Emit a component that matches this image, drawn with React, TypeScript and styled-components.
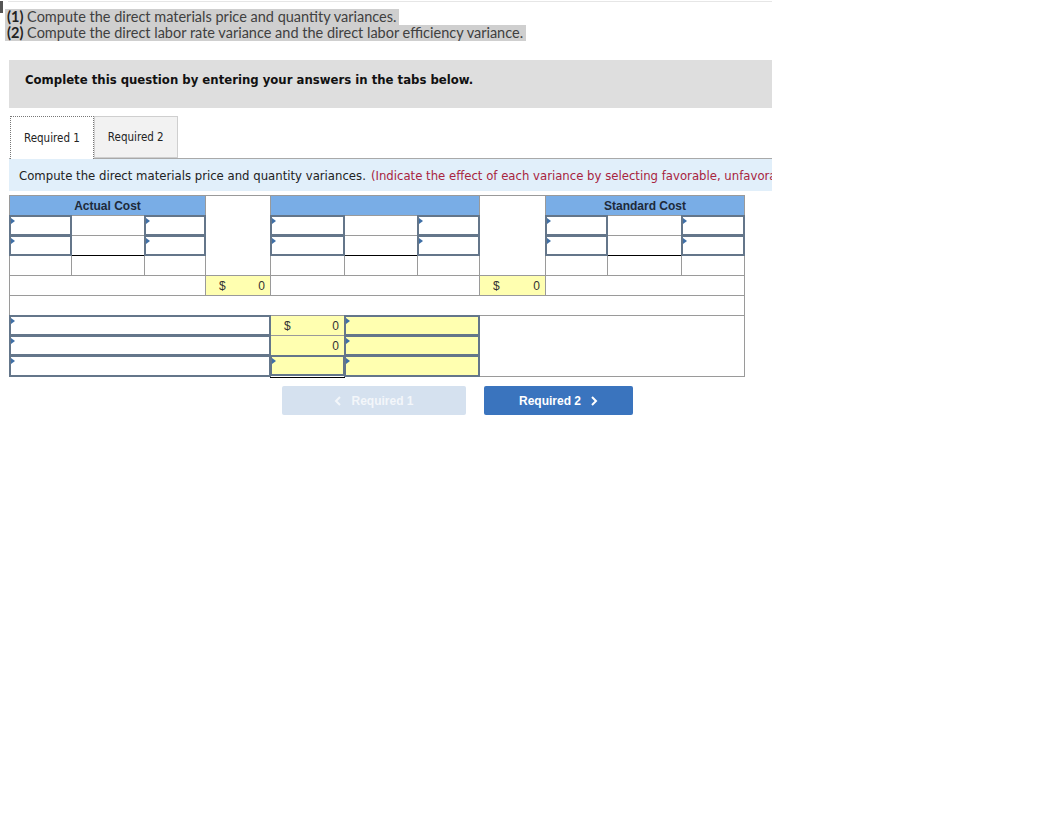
import { FC } from "react";
import styled, { createGlobalStyle } from "styled-components";

const GlobalStyle = createGlobalStyle`
  body {
    margin: 0;
    background: #ffffff;
    font-family: "Liberation Sans", Arial, sans-serif;
  }
`;

const Page = styled.div`
  width: 1060px;
  min-height: 816px;
  position: relative;
`;

const TopRule = styled.div`
  margin-left: 8px;
  width: 764px;
  height: 1px;
  background: #e6e6e6;
  margin-top: 1px;
`;

const EdgeMark = styled.div`
  position: absolute;
  left: 0;
  top: 0;
  width: 3px;
  height: 12px;
  background: #555;
`;

const Prompt = styled.div`
  padding: 7px 0 0 5px;
  display: flex;
  flex-direction: column;
  align-items: flex-start;
`;

const PromptLine = styled.span`
  font-family: Lato, "Open Sans", sans-serif;
  font-size: 14.5px;
  line-height: 16px;
  color: #404040;
  background: #cfcfcf;
  padding: 0 3px 0 2px;

  b {
    font-weight: 700;
    color: #222;
  }
`;

const Wrap = styled.div`
  margin-left: 9px;
  width: 763px;
`;

const Notice = styled.div`
  margin-top: 19px;
  height: 48px;
  box-sizing: border-box;
  background: #dedede;
  padding: 12px 0 0 16px;
  font-family: "DejaVu Sans Condensed", "DejaVu Sans", sans-serif;
  font-weight: 700;
  font-size: 13px;
  color: #111;
`;

const TabBar = styled.div`
  margin-top: 7px;
  display: flex;
  align-items: flex-end;
  border-bottom: 1px solid #a9a9a9;
  height: 43px;
`;

const Tab = styled.div<{ $active?: boolean }>`
  height: ${({ $active }) => ($active ? "43px" : "42px")};
  box-sizing: border-box;
  margin-left: ${({ $active }) => ($active ? "1px" : "0")};
  margin-bottom: ${({ $active }) => ($active ? "-1px" : "0")};
  padding: 0 13px;
  display: flex;
  align-items: center;
  font-family: "DejaVu Sans Condensed", "DejaVu Sans", sans-serif;
  font-size: 11.5px;
  color: #222;
  background: ${({ $active }) => ($active ? "#ffffff" : "#f2f2f2")};
  border: 1px ${({ $active }) => ($active ? "dotted #777" : "solid #cfcfcf")};
  border-bottom: ${({ $active }) => ($active ? "none" : "1px solid #cfcfcf")};
`;

const Instruction = styled.div`
  height: 32px;
  background: #e1effa;
  display: flex;
  align-items: center;
  padding-left: 10px;
  white-space: nowrap;
  overflow: hidden;
  font-family: "DejaVu Sans Condensed", "DejaVu Sans", sans-serif;
  font-size: 13px;
  color: #222;
`;

const Hint = styled.span`
  color: #a8243e;
  margin-left: 5px;
`;

const Grid = styled.table`
  margin-top: 4px;
  border-collapse: collapse;
  table-layout: fixed;
  width: 735px;
  font-family: "Liberation Sans", Arial, sans-serif;
  font-size: 12px;
`;

type Under = "single" | "double";

const Cell = styled.td<{
  $head?: boolean;
  $yellow?: boolean;
  $under?: Under;
}>`
  height: 19px;
  padding: 0;
  position: relative;
  border: 1px solid #9a9a9a;
  background: ${({ $head, $yellow }) =>
    $head ? "#79ade6" : $yellow ? "#ffffb0" : "#ffffff"};
  text-align: center;
  font-weight: ${({ $head }) => ($head ? 700 : 400)};
  color: ${({ $head }) => ($head ? "#1e2a3a" : "#222")};
  border-bottom: ${({ $under }) =>
    $under === "single"
      ? "1px solid #000"
      : $under === "double"
      ? "3px double #000"
      : "1px solid #9a9a9a"};
`;

const InputBox = styled.div<{ $yellow?: boolean }>`
  position: absolute;
  inset: -1px;
  border: 2px solid #64768a;
  background: ${({ $yellow }) => ($yellow ? "#ffffb0" : "#ffffff")};
`;

const Marker = styled.span`
  position: absolute;
  left: 0;
  top: 1px;
  width: 0;
  height: 0;
  border-top: 3px solid transparent;
  border-bottom: 3px solid transparent;
  border-left: 4px solid #3f6fa6;
`;

const Amount = styled.div`
  display: flex;
  justify-content: space-between;
  align-items: center;
  padding: 0 5px 0 13px;
  font-size: 12px;
  color: #333;
`;

const Buttons = styled.div`
  display: flex;
  gap: 18px;
  margin: 8px 0 0 273px;
`;

const NavButton = styled.button<{ $disabled?: boolean }>`
  height: 29px;
  width: ${({ $disabled }) => ($disabled ? "184px" : "149px")};
  border: none;
  border-radius: 2px;
  background: ${({ $disabled }) => ($disabled ? "#d5e1ef" : "#3a74be")};
  color: ${({ $disabled }) => ($disabled ? "#f3f6fa" : "#ffffff")};
  font-family: "Liberation Sans", Arial, sans-serif;
  font-weight: 700;
  font-size: 12px;
  display: flex;
  align-items: center;
  justify-content: center;
  gap: 9px;
  padding: 0;
`;

const Input: FC<{ yellow?: boolean }> = ({ yellow }) => (
  <InputBox $yellow={yellow}>
    <Marker />
  </InputBox>
);

const Chevron: FC<{ left?: boolean }> = ({ left }) => (
  <svg width="8" height="10" viewBox="0 0 8 10">
    <path
      d={left ? "M6 1 L2 5 L6 9" : "M2 1 L6 5 L2 9"}
      fill="none"
      stroke="currentColor"
      strokeWidth="2"
    />
  </svg>
);

const widths = [62, 73, 61, 65, 74, 73, 62, 66, 62, 74, 63];

const InputRow: FC<{ under?: boolean }> = ({ under }) => (
  <tr>
    <Cell><Input /></Cell>
    <Cell $under={under ? "single" : undefined} />
    <Cell><Input /></Cell>
    <Cell style={{ borderTop: "none", borderBottom: "none" }} />
    <Cell><Input /></Cell>
    <Cell $under={under ? "single" : undefined} />
    <Cell><Input /></Cell>
    <Cell style={{ borderTop: "none", borderBottom: "none" }} />
    <Cell><Input /></Cell>
    <Cell $under={under ? "single" : undefined} />
    <Cell><Input /></Cell>
  </tr>
);

const Dollar: FC<{ sign?: boolean }> = ({ sign = true }) => (
  <Amount>
    <span>{sign ? "$" : ""}</span>
    <span>0</span>
  </Amount>
);

export default function App() {
  return (
    <Page>
      <GlobalStyle />
      <EdgeMark />
      <TopRule />
      <Prompt>
        <PromptLine>
          <b>(1)</b> Compute the direct materials price and quantity variances.
        </PromptLine>
        <PromptLine>
          <b>(2)</b> Compute the direct labor rate variance and the direct labor
          efficiency variance.
        </PromptLine>
      </Prompt>
      <Wrap>
        <Notice>Complete this question by entering your answers in the tabs below.</Notice>
        <TabBar>
          <Tab $active>Required 1</Tab>
          <Tab>Required 2</Tab>
        </TabBar>
        <Instruction>
          Compute the direct materials price and quantity variances.
          <Hint>
            (Indicate the effect of each variance by selecting favorable,
            unfavorable, or no variance.)
          </Hint>
        </Instruction>
        <Grid>
          <colgroup>
            {widths.map((w, i) => (
              <col key={i} style={{ width: w }} />
            ))}
          </colgroup>
          <tbody>
            <tr>
              <Cell $head colSpan={3}>Actual Cost</Cell>
              <Cell style={{ borderBottom: "none" }} />
              <Cell $head colSpan={3} />
              <Cell style={{ borderBottom: "none" }} />
              <Cell $head colSpan={3}>Standard Cost</Cell>
            </tr>
            <InputRow />
            <InputRow under />
            <tr>
              <Cell />
              <Cell />
              <Cell />
              <Cell style={{ borderTop: "none" }} />
              <Cell />
              <Cell />
              <Cell />
              <Cell style={{ borderTop: "none" }} />
              <Cell />
              <Cell />
              <Cell />
            </tr>
            <tr>
              <Cell colSpan={3} />
              <Cell $yellow><Dollar /></Cell>
              <Cell colSpan={3} />
              <Cell $yellow><Dollar /></Cell>
              <Cell colSpan={3} />
            </tr>
            <tr>
              <Cell colSpan={11} />
            </tr>
            <tr>
              <Cell colSpan={4}><Input /></Cell>
              <Cell $yellow><Dollar /></Cell>
              <Cell colSpan={2} $yellow><Input yellow /></Cell>
              <Cell colSpan={4} rowSpan={3} />
            </tr>
            <tr>
              <Cell colSpan={4}><Input /></Cell>
              <Cell $yellow><Dollar sign={false} /></Cell>
              <Cell colSpan={2} $yellow><Input yellow /></Cell>
            </tr>
            <tr>
              <Cell colSpan={4}><Input /></Cell>
              <Cell $yellow $under="double"><Input yellow /></Cell>
              <Cell colSpan={2} $yellow><Input yellow /></Cell>
            </tr>
          </tbody>
        </Grid>
        <Buttons>
          <NavButton $disabled>
            <Chevron left />
            Required 1
          </NavButton>
          <NavButton>
            Required 2
            <Chevron />
          </NavButton>
        </Buttons>
      </Wrap>
    </Page>
  );
}
